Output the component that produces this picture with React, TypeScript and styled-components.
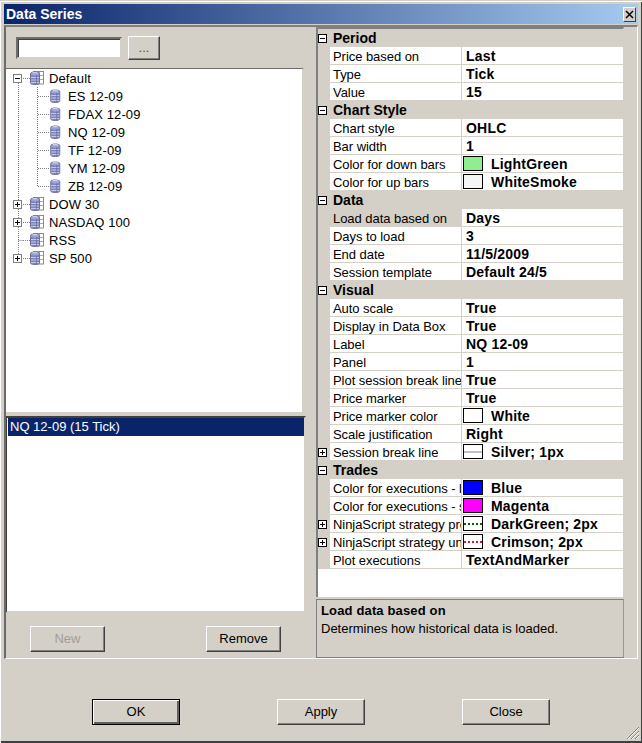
import React from 'react';
import styled, { createGlobalStyle, css } from 'styled-components';

const GlobalStyle = createGlobalStyle`
  html, body {
    margin: 0;
    padding: 0;
    background: #d4d0c8;
  }
  * {
    box-sizing: border-box;
  }
`;

const FACE = '#d4d0c8';

const sunken = css`
  border-style: solid;
  border-width: 2px;
  border-color: #6f6d68 ${FACE} ${FACE} #6f6d68;
  box-shadow: inset 1px 1px 0 #404040;
`;

const Window = styled.div`
  width: 642px;
  height: 743px;
  padding: 4px 4px 0;
  display: flex;
  flex-direction: column;
  background: ${FACE};
  font-family: 'Liberation Sans', Arial, sans-serif;
  font-size: 13px;
  color: #000;
  border-top: 1px solid ${FACE};
  box-shadow: inset 1px 1px 0 #fff, inset -1px -2px 0 #404040;
  overflow: hidden;
`;

const TitleBar = styled.div`
  height: 20px;
  margin-top: -1px;
  flex: none;
  display: flex;
  align-items: center;
  justify-content: space-between;
  padding: 0 2px 0 2px;
  background: linear-gradient(90deg, #0a246a, #a6caf0);
  color: #fff;
  font-size: 14px;
  font-weight: bold;
`;

const CloseBox = styled.div`
  width: 13px;
  height: 15px;
  background: ${FACE};
  border: 1px solid;
  border-color: #fff #404040 #404040 #fff;
  display: flex;
  align-items: center;
  justify-content: center;
`;

const Body = styled.div`
  margin-top: 1px;
  height: 634px;
  width: 634px;
  flex: none;
  display: flex;
  border-style: solid;
  border-width: 2px 1px 1px 2px;
  border-color: #808080 #fff #fff #6b6a66;
`;

const LeftPane = styled.div`
  width: 300px;
  flex: none;
  display: flex;
  flex-direction: column;
`;

const SearchRow = styled.div`
  height: 41px;
  flex: none;
  padding: 9px 0 0 10px;
  display: flex;
  gap: 6px;
`;

const SearchInput = styled.div`
  width: 106px;
  height: 22px;
  margin-top: 1px;
  background: #fff;
  ${sunken}
`;

const Button = styled.button<{ $width?: number; $default?: boolean }>`
  width: ${(p) => p.$width ?? 75}px;
  height: 26px;
  padding: 0 0 1px;
  flex: none;
  font-family: inherit;
  font-size: 13px;
  color: #000;
  background: ${FACE};
  border-style: solid;
  border-width: 1px;
  border-color: #fff #404040 #404040 #fff;
  box-shadow: inset -1px -1px 0 #808080;
  ${(p) =>
    p.$default &&
    css`
      border: 1px solid #000;
      box-shadow: inset 1px 1px 0 #fff, inset -2px -2px 0 #606060;
    `}
  &:disabled {
    color: #a09e98;
  }
`;

const DotsButton = styled(Button)`
  width: 32px;
  height: 24px;
  color: #7a4a10;
  line-height: 20px;
`;

const TreeBox = styled.div`
  width: 298px;
  height: 346px;
  flex: none;
  background: #fff;
  padding-left: 2px;
  border-style: solid;
  border-width: 1px 2px 2px 0;
  border-color: #6f6d68 ${FACE} ${FACE} #fff;
`;

const TreeRow = styled.div`
  height: 18px;
  display: flex;
  align-items: center;
  white-space: nowrap;
`;

const TreeLabel = styled.span<{ $child?: boolean }>`
  margin-left: ${(p) => (p.$child ? 7 : 5)}px;
  font-size: 13px;
  letter-spacing: 0.1px;
`;

const ListBox = styled.div`
  width: 300px;
  height: 197px;
  margin-top: 2px;
  flex: none;
  background: #fff;
  border-style: solid;
  border-width: 2px 2px 2px 1px;
  border-color: #404040 ${FACE} ${FACE} #404040;
`;

const ListItem = styled.div`
  height: 18px;
  margin-left: 1px;
  padding-left: 2px;
  background: #0a246a;
  color: #fff;
  font-size: 13px;
  line-height: 18px;
`;

const PaneActions = styled.div`
  padding: 13px 0 0 24px;
  display: flex;
  gap: 101px;
`;

const RightPane = styled.div`
  width: 308px;
  margin-left: 10px;
  flex: none;
  display: flex;
  flex-direction: column;
`;

const Grid = styled.div`
  height: 570px;
  flex: none;
  background: #fff;
  border-style: solid;
  border-width: 2px 1px 0 2px;
  border-color: #808080 ${FACE} ${FACE} #808080;
  overflow: hidden;
`;

const GroupRow = styled.div`
  height: 18px;
  display: flex;
  align-items: center;
  background: ${FACE};
  font-size: 14px;
  font-weight: bold;
`;

const GroupName = styled.span`
  margin-left: 6px;
`;

const PropRow = styled.div`
  height: 18px;
  display: grid;
  grid-template-columns: 12px 132px 1fr;
  border-bottom: 1px solid ${FACE};
`;

const Gutter = styled.div`
  background: ${FACE};
  display: flex;
  align-items: center;
  margin-bottom: -1px;
`;

const PropLabel = styled.div<{ $selected?: boolean }>`
  padding: 1px 0 0 3px;
  line-height: 17px;
  letter-spacing: -0.05px;
  white-space: nowrap;
  overflow: hidden;
  background: ${(p) => (p.$selected ? FACE : 'transparent')};
  border-right: 1px solid ${FACE};
`;

const PropValue = styled.div`
  display: flex;
  align-items: center;
  padding-left: 4px;
  font-size: 14px;
  letter-spacing: 0.2px;
  font-weight: bold;
  white-space: nowrap;
  overflow: hidden;
`;

const SwatchValue = styled(PropValue)`
  padding-left: 1px;
`;

const Swatch = styled.div<{ $color: string }>`
  width: 20px;
  height: 15px;
  flex: none;
  margin-right: 8px;
  background: ${(p) => p.$color};
  border: 1px solid #000;
  display: flex;
  align-items: center;
`;

const SwatchLine = styled.div<{ $color: string; $dotted?: boolean }>`
  width: 100%;
  border-top: 2px ${(p) => (p.$dotted ? 'dotted' : 'solid')} ${(p) => p.$color};
`;

const HelpBox = styled.div`
  height: 59px;
  margin-top: 2px;
  flex: none;
  padding: 2px 0 0 4px;
  border: 1px solid #808080;
  border-right-color: #9a9892;
`;

const HelpTitle = styled.div`
  height: 18px;
  line-height: 18px;
  letter-spacing: 0.15px;
  font-weight: bold;
`;

const HelpText = styled.div`
  height: 17px;
  line-height: 17px;
`;

const Footer = styled.div`
  position: relative;
  flex: 1;
  padding: 40px 0 0 88px;
  display: flex;
  gap: 97px;
  align-items: flex-start;
`;

const Grip = styled.svg`
  position: absolute;
  right: -2px;
  bottom: 3px;
`;

const Expander = ({ open, color = '#808080' }: { open: boolean; color?: string }) => (
  <svg width="9" height="9" viewBox="0 0 9 9" style={{ display: 'block', flex: 'none' }}>
    <rect x="0.5" y="0.5" width="8" height="8" fill="#fff" stroke={color} />
    <path d="M2 4.5H7" stroke="#000" />
    {!open && <path d="M4.5 2V7" stroke="#000" />}
  </svg>
);

// dotted connector lines of the tree, one piece per row
const Lines = ({ width, d, children }: { width: number; d: string; children?: React.ReactNode }) => (
  <svg width={width} height="18" viewBox={`0 0 ${width} 18`} style={{ display: 'block', flex: 'none' }}>
    <path d={d} stroke="#808080" strokeDasharray="1 1" fill="none" />
    {children}
  </svg>
);

const Cylinder = ({ x = 0 }: { x?: number }) => (
  <g transform={`translate(${x} 0)`}>
    <path d="M0.5 2.5C0.5 0.5 9.5 0.5 9.5 2.5V12C9.5 14 0.5 14 0.5 12Z" fill="#9da3d6" stroke="#6e7099" />
    <path d="M1 3.5C3 5 7 5 9 3.5V12C7 13.4 3 13.4 1 12Z" fill="#7e83bd" />
    <path d="M1 6.5H9M1 9H9M1 11.5H9" stroke="#c4c7e8" />
    <path d="M6.5 4.5V13" stroke="#575a8e" opacity="0.55" />
    <path d="M2.5 1.7H7.5" stroke="#dfe1f5" />
  </g>
);

const DbIcon = () => (
  <svg width="11" height="14" viewBox="0 0 10.5 14" style={{ display: 'block', flex: 'none' }}>
    <Cylinder />
  </svg>
);

const DbFolderIcon = () => (
  <svg width="14" height="14" viewBox="0 0 14 14" style={{ display: 'block', flex: 'none' }}>
    <rect x="3.5" y="0.5" width="10" height="12.5" fill="#fff" stroke="#8a8a92" />
    <path d="M4 4.5H13M4 8.5H13M9.5 1V13" stroke="#a8a8b0" />
    <Cylinder />
  </svg>
);

const children = ['ES 12-09', 'FDAX 12-09', 'NQ 12-09', 'TF 12-09', 'YM 12-09', 'ZB 12-09'];
const roots = [
  { name: 'DOW 30', expander: true },
  { name: 'NASDAQ 100', expander: true },
  { name: 'RSS', expander: false },
  { name: 'SP 500', expander: true },
];

const Tree = () => (
  <TreeBox>
    <TreeRow>
      <Lines width={22} d="M10.5 14V18M15 9.5H22">
        <foreignObject x="5" y="5" width="9" height="9">
          <Expander open />
        </foreignObject>
      </Lines>
      <DbFolderIcon />
      <TreeLabel>Default</TreeLabel>
    </TreeRow>
    {children.map((name, i) => (
      <TreeRow key={name}>
        <Lines
          width={42}
          d={`M10.5 0V18M29.5 0V${i === children.length - 1 ? 9 : 18}M30 9.5H42`}
        />
        <DbIcon />
        <TreeLabel $child>{name}</TreeLabel>
      </TreeRow>
    ))}
    {roots.map((root, i) => (
      <TreeRow key={root.name}>
        <Lines width={22} d={`M10.5 0V${i === roots.length - 1 ? 5 : 18}M15 9.5H22${root.expander ? '' : 'M10.5 9.5H15'}`}>
          {root.expander && (
            <foreignObject x="5" y="5" width="9" height="9">
              <Expander open={false} />
            </foreignObject>
          )}
        </Lines>
        <DbFolderIcon />
        <TreeLabel>{root.name}</TreeLabel>
      </TreeRow>
    ))}
  </TreeBox>
);

type Prop = {
  label: string;
  value: string;
  color?: string;
  line?: string;
  dotted?: boolean;
  expandable?: boolean;
  selected?: boolean;
};

const groups: { name: string; props: Prop[] }[] = [
  {
    name: 'Period',
    props: [
      { label: 'Price based on', value: 'Last' },
      { label: 'Type', value: 'Tick' },
      { label: 'Value', value: '15' },
    ],
  },
  {
    name: 'Chart Style',
    props: [
      { label: 'Chart style', value: 'OHLC' },
      { label: 'Bar width', value: '1' },
      { label: 'Color for down bars', value: 'LightGreen', color: '#90ee90' },
      { label: 'Color for up bars', value: 'WhiteSmoke', color: '#f5f5f5' },
    ],
  },
  {
    name: 'Data',
    props: [
      { label: 'Load data based on', value: 'Days', selected: true },
      { label: 'Days to load', value: '3' },
      { label: 'End date', value: '11/5/2009' },
      { label: 'Session template', value: 'Default 24/5' },
    ],
  },
  {
    name: 'Visual',
    props: [
      { label: 'Auto scale', value: 'True' },
      { label: 'Display in Data Box', value: 'True' },
      { label: 'Label', value: 'NQ 12-09' },
      { label: 'Panel', value: '1' },
      { label: 'Plot session break line', value: 'True' },
      { label: 'Price marker', value: 'True' },
      { label: 'Price marker color', value: 'White', color: '#fff' },
      { label: 'Scale justification', value: 'Right' },
      { label: 'Session break line', value: 'Silver; 1px', color: '#fff', line: '#c0c0c0', expandable: true },
    ],
  },
  {
    name: 'Trades',
    props: [
      { label: 'Color for executions - buy', value: 'Blue', color: '#0000ff' },
      { label: 'Color for executions - sell', value: 'Magenta', color: '#ff00ff' },
      { label: 'NinjaScript strategy profit', value: 'DarkGreen; 2px', color: '#fff', line: '#006400', dotted: true, expandable: true },
      { label: 'NinjaScript strategy unrealized', value: 'Crimson; 2px', color: '#fff', line: '#dc143c', dotted: true, expandable: true },
      { label: 'Plot executions', value: 'TextAndMarker' },
    ],
  },
];

const PropertyRow = ({ prop }: { prop: Prop }) => (
  <PropRow>
    <Gutter>{prop.expandable && <Expander open={false} color="#000" />}</Gutter>
    <PropLabel $selected={prop.selected}>{prop.label}</PropLabel>
    {prop.color ? (
      <SwatchValue>
        <Swatch $color={prop.color}>
          {prop.line && <SwatchLine $color={prop.line} $dotted={prop.dotted} />}
        </Swatch>
        {prop.value}
      </SwatchValue>
    ) : (
      <PropValue>{prop.value}</PropValue>
    )}
  </PropRow>
);

const App = () => (
  <Window>
    <GlobalStyle />
    <TitleBar>
      Data Series
      <CloseBox>
        <svg width="9" height="9" viewBox="0 0 9 9">
          <path d="M1 1L8 8M8 1L1 8" stroke="#000" strokeWidth="1.5" />
        </svg>
      </CloseBox>
    </TitleBar>
    <Body>
      <LeftPane>
        <SearchRow>
          <SearchInput />
          <DotsButton>...</DotsButton>
        </SearchRow>
        <Tree />
        <ListBox>
          <ListItem>NQ 12-09 (15 Tick)</ListItem>
        </ListBox>
        <PaneActions>
          <Button disabled>New</Button>
          <Button>Remove</Button>
        </PaneActions>
      </LeftPane>
      <RightPane>
        <Grid>
          {groups.map((group) => (
            <React.Fragment key={group.name}>
              <GroupRow>
                <Expander open color="#000" />
                <GroupName>{group.name}</GroupName>
              </GroupRow>
              {group.props.map((prop) => (
                <PropertyRow key={prop.label} prop={prop} />
              ))}
            </React.Fragment>
          ))}
        </Grid>
        <HelpBox>
          <HelpTitle>Load data based on</HelpTitle>
          <HelpText>Determines how historical data is loaded.</HelpText>
        </HelpBox>
      </RightPane>
    </Body>
    <Footer>
      <Button $width={88} $default>OK</Button>
      <Button $width={88}>Apply</Button>
      <Button $width={88}>Close</Button>
      <Grip width="14" height="14" viewBox="0 0 14 14">
        <path d="M13 1L1 13M13 5L5 13M13 9L9 13" stroke="#808080" />
        <path d="M13 2L2 13M13 6L6 13M13 10L10 13" stroke="#fff" />
      </Grip>
    </Footer>
  </Window>
);

export default App;
